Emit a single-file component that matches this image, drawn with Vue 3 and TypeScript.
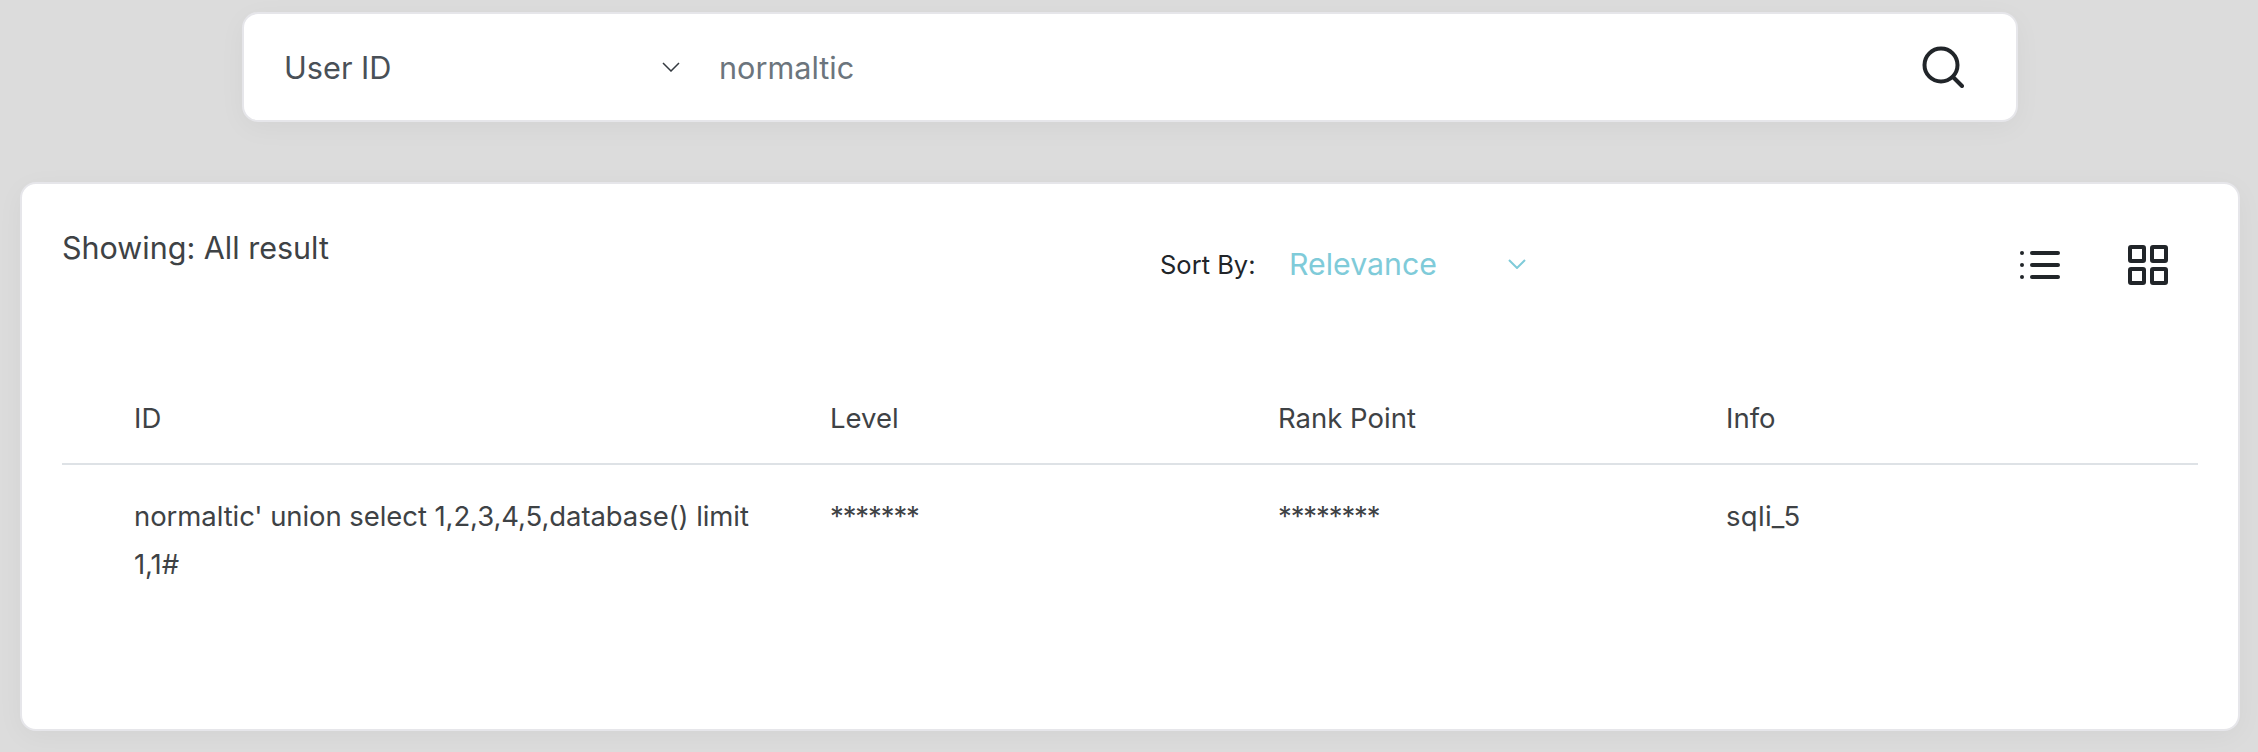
<script setup lang="ts">
const columns: string[] = ['ID', 'Level', 'Rank Point', 'Info']
const row: string[] = ["normaltic' union select 1,2,3,4,5,database() limit 1,1#", '*******', '********', 'sqli_5']
</script>

<template>
  <div class="page">
    <form class="search" @submit.prevent>
      <div class="select">
        <span>User ID</span>
        <svg class="chev" viewBox="0 0 18 10" width="18" height="10"><path d="M1 1l8 8 8-8" fill="none" stroke="#343a40" stroke-width="1.5"/></svg>
      </div>
      <span class="term">normaltic</span>
      <svg class="search-icon" viewBox="0 0 42 42" width="42" height="42">
        <circle cx="19" cy="19" r="16.5" fill="none" stroke="#212529" stroke-width="4"/>
        <path d="M31 31l9 9" fill="none" stroke="#212529" stroke-width="4" stroke-linecap="round"/>
      </svg>
    </form>

    <section class="card">
      <div class="toolbar">
        <h2 class="showing">Showing: All result</h2>
        <div class="sort">
          <span class="sort-label">Sort By:</span>
          <span class="sort-value">Relevance</span>
          <svg class="sort-chev" viewBox="0 0 18 10" width="18" height="10"><path d="M1 1l8 8 8-8" fill="none" stroke="#7fcbd9" stroke-width="2"/></svg>
        </div>
        <div class="views">
          <svg viewBox="0 0 42 30" width="42" height="30">
            <g fill="#212529">
              <circle cx="3" cy="3" r="2"/><circle cx="3" cy="15" r="2"/><circle cx="3" cy="27" r="2"/>
              <rect x="11" y="1" width="30" height="4" rx="2"/>
              <rect x="11" y="13" width="30" height="4" rx="2"/>
              <rect x="11" y="25" width="30" height="4" rx="2"/>
            </g>
          </svg>
          <svg viewBox="0 0 40 40" width="40" height="40">
            <g fill="none" stroke="#212529" stroke-width="4" stroke-linejoin="round">
              <rect x="2" y="2" width="14" height="14" rx="1"/>
              <rect x="24" y="2" width="14" height="14" rx="1"/>
              <rect x="2" y="24" width="14" height="14" rx="1"/>
              <rect x="24" y="24" width="14" height="14" rx="1"/>
            </g>
          </svg>
        </div>
      </div>

      <div class="table">
        <div class="tr head">
          <div v-for="c in columns" :key="c" class="td">{{ c }}</div>
        </div>
        <div class="tr">
          <div v-for="(c, i) in row" :key="c" class="td" :class="{ masked: i === 1 || i === 2 }">{{ c }}</div>
        </div>
      </div>
    </section>
  </div>
</template>

<style>
html, body { margin: 0; background: #dcdcdc; }
</style>

<style scoped>
.page {
  height: 752px;
  box-sizing: border-box;
  padding-top: 12px;
  overflow: hidden;
  font-family: Inter, "Liberation Sans", sans-serif;
  color: #3e4245;
}
.search {
  box-sizing: border-box;
  width: 1776px;
  height: 110px;
  margin: 0 0 0 242px;
  padding: 0 40px;
  display: flex;
  align-items: center;
  background: #fff;
  border: 2px solid #e6e6ea;
  border-radius: 16px;
  box-shadow: 0 6px 28px rgba(0, 0, 0, 0.04);
}
.select {
  width: 396px;
  display: flex;
  align-items: center;
  justify-content: space-between;
  font-size: 30.7px;
  color: #495057;
}
.term {
  flex: 1;
  margin-left: 39px;
  font-size: 30.6px;
  color: #6c757d;
}
.search-icon { margin-right: 12px; }
.card {
  box-sizing: border-box;
  width: 2220px;
  height: 549px;
  margin: 60px 0 0 20px;
  padding: 0 40px;
  background: #fff;
  border: 2px solid #e6e6ea;
  border-radius: 16px;
  box-shadow: 0 6px 28px rgba(0, 0, 0, 0.04);
}
.toolbar {
  display: flex;
  align-items: flex-start;
  height: 171px;
  padding-top: 47px;
  box-sizing: border-box;
}
.showing {
  width: 1098px;
  margin: -3px 0 0;
  font-size: 30.5px;
  font-weight: 400;
  line-height: 40px;
}
.sort {
  width: 400px;
  height: 60px;
  margin-top: 3px;
  display: flex;
  align-items: center;
  color: #212529;
}
.sort-label { font-size: 25.5px; width: 129px; }
.sort-value { font-size: 30.3px; width: 219px; color: #7fcbd9; }
.views {
  margin: 4px 0 0 459px;
  display: flex;
  align-items: center;
  gap: 67px;
  height: 60px;
}
.table { font-size: 27.5px; }
.tr {
  display: grid;
  grid-template-columns: 768px 448px 448px 1fr;
}
.head {
  height: 110px;
  align-items: end;
  box-sizing: border-box;
  border-bottom: 2px solid #dee2e6;
}
.head .td { padding-bottom: 28px; }
.tr:not(.head) { padding-top: 27px; line-height: 48px; }
.td:first-child { padding-left: 72px; padding-right: 30px; }
.tr:not(.head) .td:first-child { letter-spacing: -0.08px; }
.tr:not(.head) .td:last-child { letter-spacing: 0.3px; }
.masked { letter-spacing: -1.1px; }
</style>
